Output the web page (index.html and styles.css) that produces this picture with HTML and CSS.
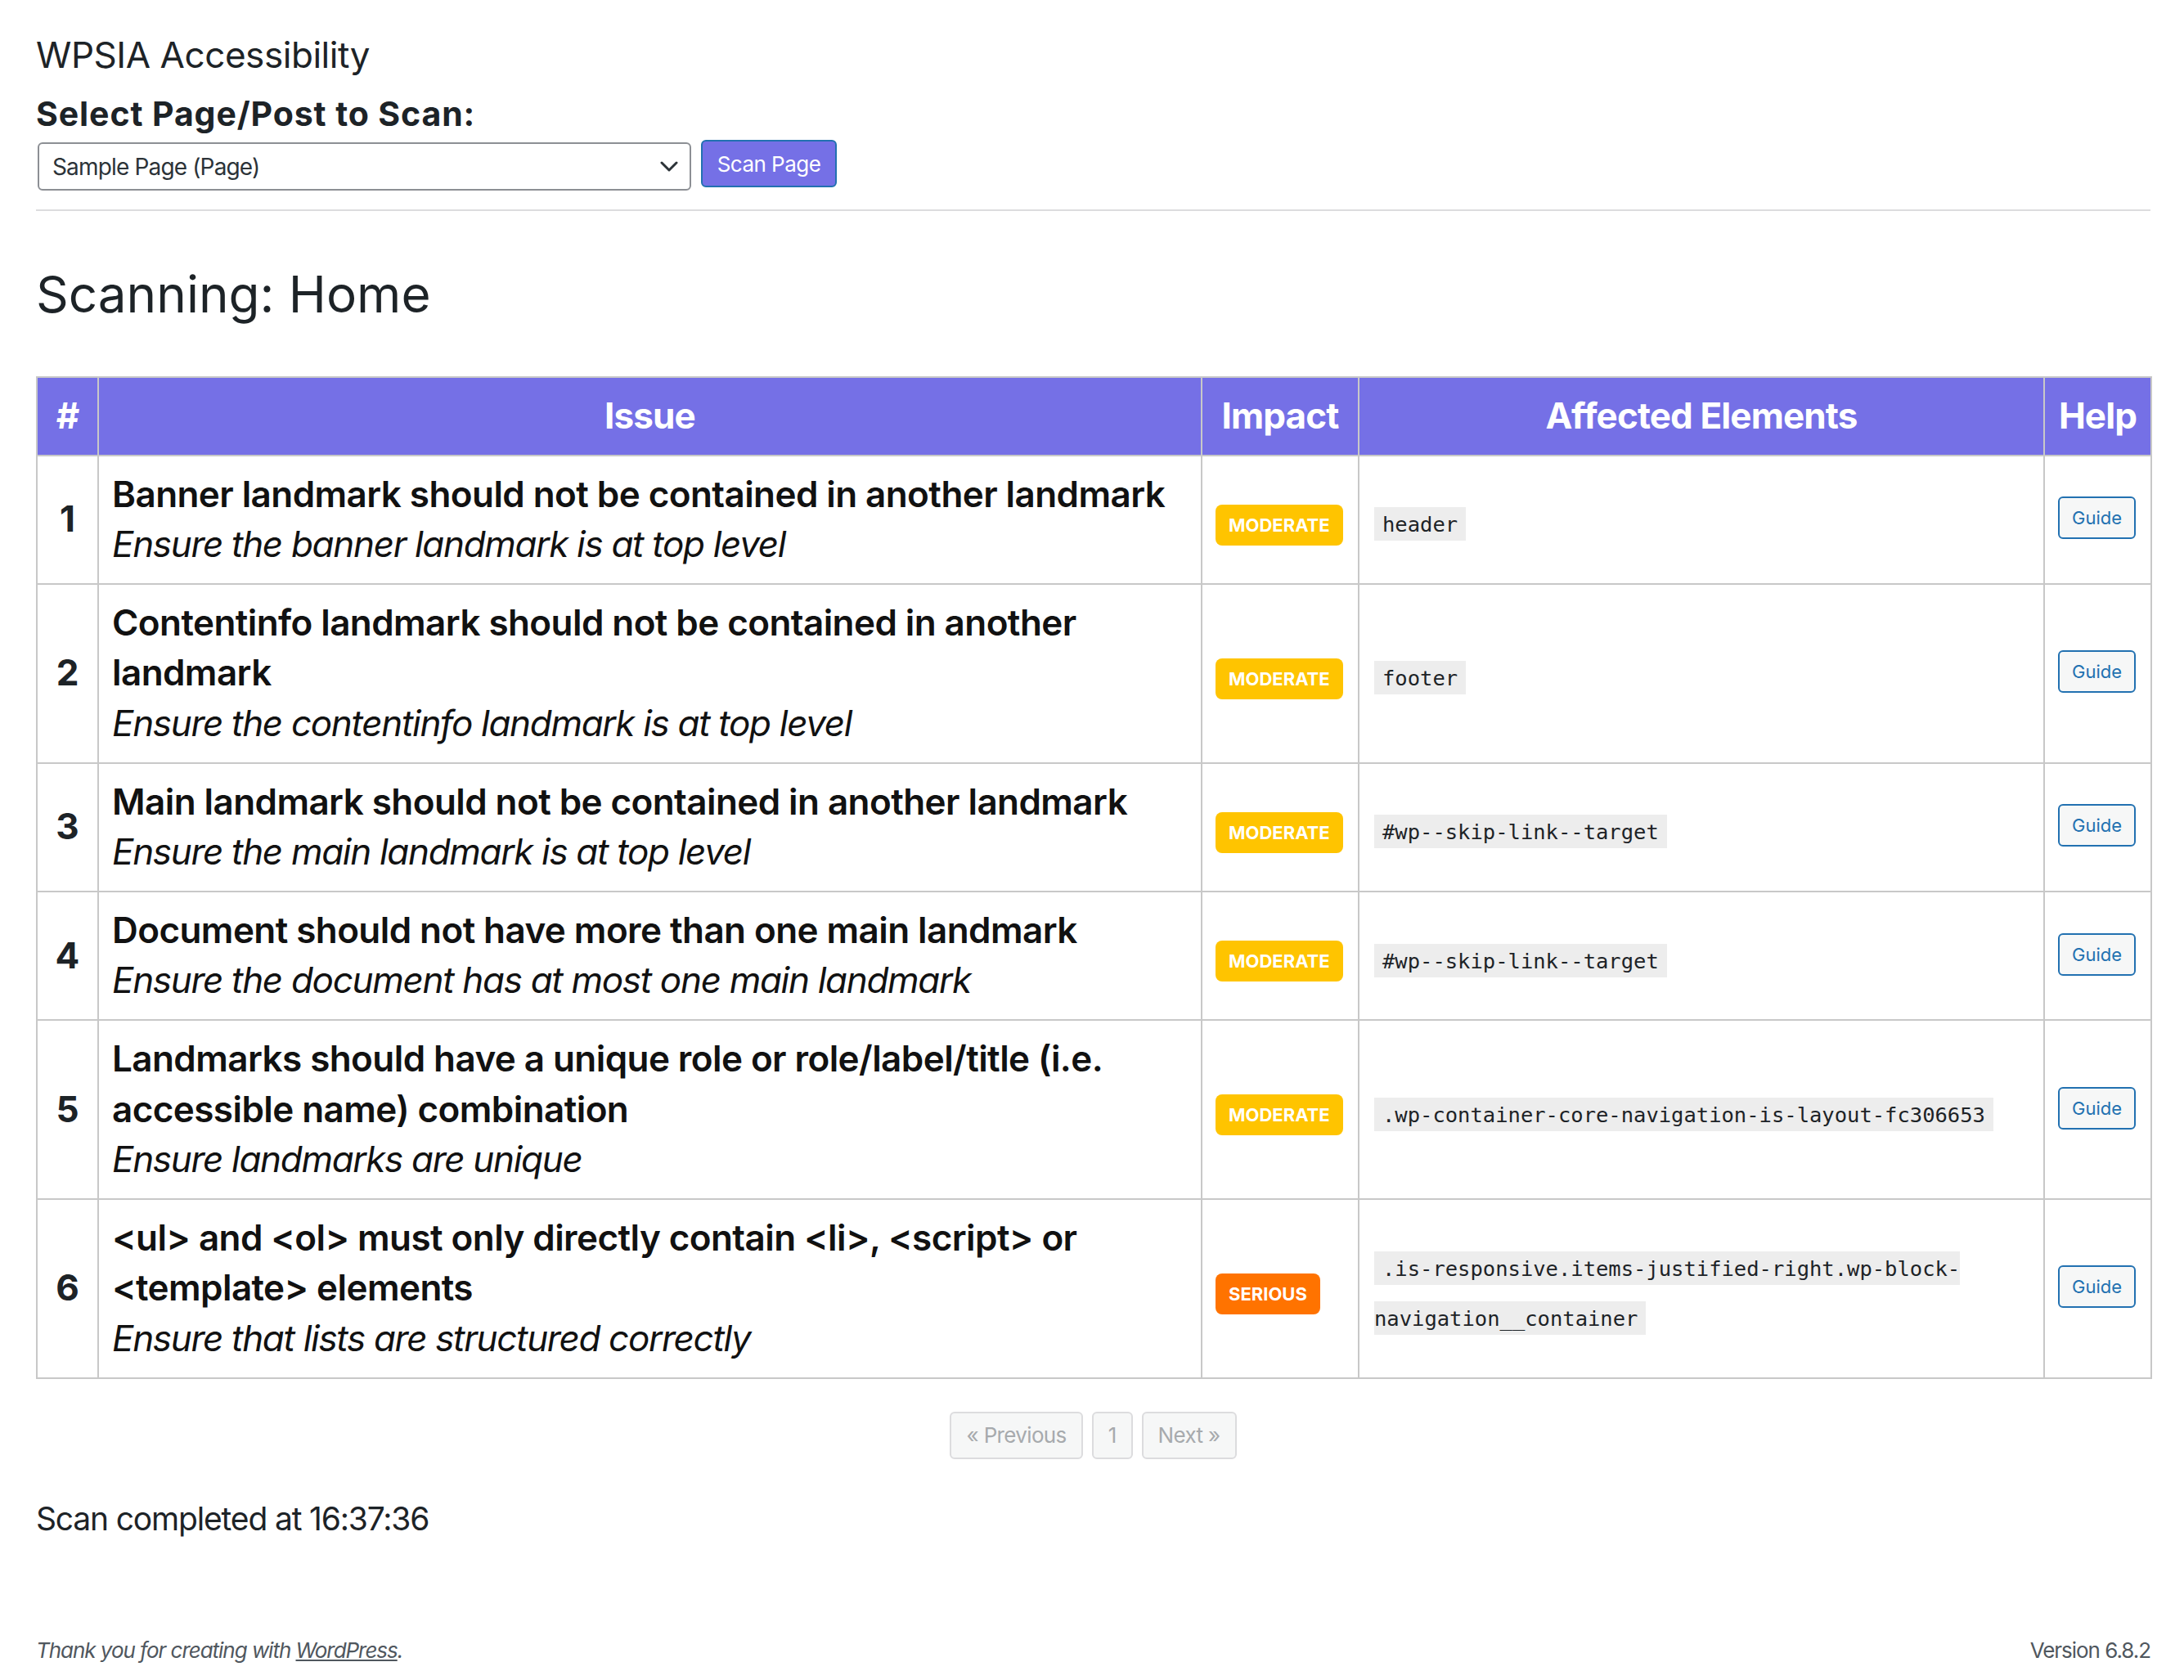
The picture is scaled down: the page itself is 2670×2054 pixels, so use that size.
FILE: index.html
```html
<!DOCTYPE html>
<html lang="en">
<head>
<meta charset="utf-8">
<title>WPSIA Accessibility</title>
<link rel="stylesheet" href="styles.css">
</head>
<body>
<div class="wrap">
  <h1 class="page-title">WPSIA Accessibility</h1>
  <form class="scan-form">
    <h2 class="scan-label">Select Page/Post to Scan:</h2>
    <div class="scan-controls">
      <div class="select-box">
        <span class="select-value">Sample Page (Page)</span>
        <svg class="select-chevron" width="22" height="13" viewBox="0 0 22 13"><path d="M2 2 L11 11 L20 2" fill="none" stroke="#2c3338" stroke-width="3" stroke-linecap="round" stroke-linejoin="round"/></svg>
      </div>
      <button type="button" class="btn-scan">Scan Page</button>
    </div>
  </form>
  <hr class="divider">
  <h2 class="scanning-title">Scanning: Home</h2>

  <table class="results">
    <colgroup>
      <col class="col-num"><col class="col-issue"><col class="col-impact"><col class="col-elements"><col class="col-help">
    </colgroup>
    <thead>
      <tr><th>#</th><th>Issue</th><th>Impact</th><th>Affected Elements</th><th>Help</th></tr>
    </thead>
    <tbody>
      <tr>
        <td class="num">1</td>
        <td class="issue"><strong class="issue-title">Banner landmark should not be contained in another landmark</strong><em class="issue-desc">Ensure the banner landmark is at top level</em></td>
        <td class="impact"><span class="badge badge-moderate">MODERATE</span></td>
        <td class="elements"><code>header</code></td>
        <td class="help"><a class="guide">Guide</a></td>
      </tr>
      <tr>
        <td class="num">2</td>
        <td class="issue"><strong class="issue-title">Contentinfo landmark should not be contained in another landmark</strong><em class="issue-desc">Ensure the contentinfo landmark is at top level</em></td>
        <td class="impact"><span class="badge badge-moderate">MODERATE</span></td>
        <td class="elements"><code>footer</code></td>
        <td class="help"><a class="guide">Guide</a></td>
      </tr>
      <tr>
        <td class="num">3</td>
        <td class="issue"><strong class="issue-title">Main landmark should not be contained in another landmark</strong><em class="issue-desc">Ensure the main landmark is at top level</em></td>
        <td class="impact"><span class="badge badge-moderate">MODERATE</span></td>
        <td class="elements"><code>#wp--skip-link--target</code></td>
        <td class="help"><a class="guide">Guide</a></td>
      </tr>
      <tr>
        <td class="num">4</td>
        <td class="issue"><strong class="issue-title">Document should not have more than one main landmark</strong><em class="issue-desc">Ensure the document has at most one main landmark</em></td>
        <td class="impact"><span class="badge badge-moderate">MODERATE</span></td>
        <td class="elements"><code>#wp--skip-link--target</code></td>
        <td class="help"><a class="guide">Guide</a></td>
      </tr>
      <tr>
        <td class="num">5</td>
        <td class="issue"><strong class="issue-title">Landmarks should have a unique role or role/label/title (i.e. accessible name) combination</strong><em class="issue-desc">Ensure landmarks are unique</em></td>
        <td class="impact"><span class="badge badge-moderate">MODERATE</span></td>
        <td class="elements"><code>.wp-container-core-navigation-is-layout-fc306653</code></td>
        <td class="help"><a class="guide">Guide</a></td>
      </tr>
      <tr>
        <td class="num">6</td>
        <td class="issue"><strong class="issue-title">&lt;ul&gt; and &lt;ol&gt; must only directly contain &lt;li&gt;, &lt;script&gt; or &lt;template&gt; elements</strong><em class="issue-desc">Ensure that lists are structured correctly</em></td>
        <td class="impact"><span class="badge badge-serious">SERIOUS</span></td>
        <td class="elements"><code>.is-responsive.items-justified-right.wp-block-navigation__container</code></td>
        <td class="help"><a class="guide">Guide</a></td>
      </tr>
    </tbody>
  </table>

  <nav class="pagination">
    <span class="page-btn">« Previous</span>
    <span class="page-btn">1</span>
    <span class="page-btn">Next »</span>
  </nav>

  <p class="completed">Scan completed at 16:37:36</p>
</div>

<footer class="admin-footer">
  <p class="thanks">Thank you for creating with <a class="wp-link">WordPress</a>.</p>
  <p class="version">Version 6.8.2</p>
</footer>
</body>
</html>
```

FILE: styles.css
```css
* { box-sizing: border-box; }

html, body {
  margin: 0;
  padding: 0;
  background: #ffffff;
}

body {
  font-family: Inter, "Noto Sans", "Liberation Sans", sans-serif;
  color: #1d2327;
  min-height: 100vh;
  display: flex;
  flex-direction: column;
}

.wrap {
  padding: 37px 41px 0 44px;
}

.page-title {
  margin: 0;
  font-size: 44px;
  line-height: 60px;
  font-weight: 400;
  color: #1d2327;
  letter-spacing: -0.01em;
}

.scan-form { margin: 0; }

.scan-label {
  margin: 18px 0 0;
  font-size: 41px;
  line-height: 48px;
  font-weight: 700;
  color: #1d2327;
  letter-spacing: 0.022em;
}

.scan-controls {
  display: flex;
  align-items: flex-start;
  gap: 12px;
  margin-top: 8px;
}

.select-box {
  margin-top: 3px;
  margin-left: 2px;
  width: 799px;
  height: 59px;
  border: 2px solid #8c8f94;
  border-radius: 6px;
  background: #fff;
  display: flex;
  align-items: center;
  justify-content: space-between;
  padding: 0 14px 0 16px;
}

.select-value {
  font-size: 28px;
  color: #2c3338;
  letter-spacing: -0.03em;
}

.select-chevron { display: block; }

.btn-scan {
  height: 58px;
  width: 166px;
  padding: 0;
  background: #7570e6;
  border: 2px solid #2271b1;
  border-radius: 6px;
  color: #ffffff;
  font-family: inherit;
  font-size: 26px;
  font-weight: 400;
  letter-spacing: -0.02em;
}

.divider {
  margin: 23px 0 0;
  border: 0;
  border-top: 2px solid #dcdcde;
  height: 0;
}

.scanning-title {
  margin: 65px 0 0;
  font-size: 62px;
  line-height: 74px;
  font-weight: 400;
  color: #1d2327;
  letter-spacing: 0;
}

.results {
  margin-top: 63px;
  width: 100%;
  border-collapse: collapse;
  table-layout: fixed;
  font-size: 44px;
  line-height: 1.4;
}

.col-num { width: 75px; }
.col-issue { width: 1349px; }
.col-impact { width: 192px; }
.col-elements { width: 838px; }
.col-help { width: 131px; }

.results th,
.results td {
  border: 2px solid #c8c8c8;
  padding: 16px;
  vertical-align: middle;
}

.results th {
  background: #7570e6;
  color: #ffffff;
  font-weight: 700;
  text-align: center;
  letter-spacing: -0.02em;
}

.results td.num {
  text-align: center;
  font-weight: 700;
  color: #1d2327;
  padding: 16px 0;
}

.issue-title {
  display: block;
  font-weight: 600;
  color: #111111;
  letter-spacing: -0.013em;
}

.issue-desc {
  display: block;
  font-style: italic;
  font-weight: 400;
  color: #111111;
  letter-spacing: -0.03em;
}

.badge {
  display: inline-block;
  font-size: 22px;
  line-height: 34px;
  font-weight: 700;
  color: #ffffff;
  padding: 8px 16px;
  border-radius: 8px;
  vertical-align: baseline;
}

.badge-moderate { background: #ffc400; }
.badge-serious { background: #ff7300; }

.results td.elements {
  padding-left: 18px;
}

code {
  font-family: "DejaVu Sans Mono", "Liberation Mono", monospace;
  font-size: 25.5px;
  background: #ededed;
  color: #1d2327;
  padding: 6px 10px 5px;
  word-break: break-word;
}

.results td.help {
  padding: 11px 16px 21px;
}

.guide {
  display: inline-block;
  font-size: 22px;
  line-height: 48px;
  padding: 0 15px;
  border: 2px solid #2271b1;
  border-radius: 6px;
  background: #f6f7f7;
  color: #2271b1;
  vertical-align: middle;
}

.pagination {
  margin-top: 40px;
  display: flex;
  justify-content: center;
  gap: 11px;
}

.page-btn {
  display: inline-block;
  height: 58px;
  line-height: 54px;
  padding: 0 18px;
  border: 2px solid #dcdcde;
  border-radius: 6px;
  background: #f6f7f7;
  color: #a7aaad;
  font-size: 26px;
  letter-spacing: -0.025em;
}

.completed {
  margin: 47px 0 0;
  font-size: 39px;
  line-height: 51px;
  color: #1d2327;
  letter-spacing: -0.03em;
}

.admin-footer {
  margin-top: auto;
  display: flex;
  justify-content: space-between;
  align-items: baseline;
  padding: 0 41px 18px 44px;
  color: #50575e;
  font-size: 26px;
  line-height: 36px;
}

.admin-footer p { margin: 0; }

.thanks { font-style: italic; letter-spacing: -0.04em; }

.wp-link {
  color: #50575e;
  text-decoration: underline;
}

.version { letter-spacing: -0.04em; }
```
